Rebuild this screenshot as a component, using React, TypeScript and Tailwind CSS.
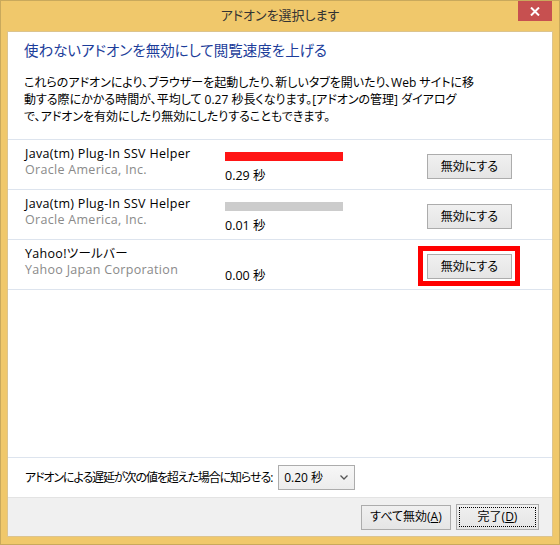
import React from "react";

const jp = "font-['Open_Sans','Noto_Sans_CJK_JP',sans-serif] [font-feature-settings:'palt']";

function Btn({ children, className = "" }: { children: React.ReactNode; className?: string }) {
  return (
    <div
      className={`flex items-center justify-center border border-[#acacac] bg-gradient-to-b from-[#f0f0f0] to-[#e5e5e5] text-[12px] text-black ${className}`}
    >
      {children}
    </div>
  );
}

const rows = [
  { name: "Java(tm) Plug-In SSV Helper", company: "Oracle America, Inc.", time: "0.29 秒", bar: "bg-[#ff1515]", hl: false },
  { name: "Java(tm) Plug-In SSV Helper", company: "Oracle America, Inc.", time: "0.01 秒", bar: "bg-[#cccccc]", hl: false },
  { name: "Yahoo!ツールバー", company: "Yahoo Japan Corporation", time: "0.00 秒", bar: "", hl: true },
];

export default function App() {
  return (
    <div className={`w-[560px] h-[545px] bg-[#f0c86b] border border-[#c9a95c] flex flex-col ${jp}`}>
      {/* title bar */}
      <div className="relative h-[30px] flex items-center justify-center">
        <span className="text-[13px] text-[#333333] pb-[1px]">アドオンを選択します</span>
        <div className="absolute right-[7px] top-0 w-[34px] h-[20px] bg-[#c75050] flex items-center justify-center">
          <svg width="10" height="9" viewBox="0 0 10 9">
            <path d="M1 0.5 L9 8.5 M9 0.5 L1 8.5" stroke="white" strokeWidth="2" />
          </svg>
        </div>
      </div>
      {/* client */}
      <div className="mx-[6px] h-[506px] bg-white border border-[#dcc48e] flex flex-col">
        <div className="pl-[16px] pt-[8px]">
          <div className="text-[14.5px] leading-[22px] text-[#1c3d9a]">使わないアドオンを無効にして閲覧速度を上げる</div>
          <div className="mt-[12px] text-[12px] leading-[17px] text-black">
            これらのアドオンにより、ブラウザーを起動したり、新しいタブを開いたり、Web サイトに移
            <br />
            動する際にかかる時間が、平均して 0.27 秒長くなります。[アドオンの管理] ダイアログ
            <br />
            で、アドオンを有効にしたり無効にしたりすることもできます。
          </div>
        </div>
        <div className="mt-[14px] border-t border-[#dde4ee]">
          {rows.map((r, i) => (
            <div key={i} className="h-[50px] border-b border-[#dde4ee] flex">
              <div className="w-[217px] pl-[17px] pt-[6px] text-[12.5px] leading-[16px] tracking-[0.3px]">
                <div className="text-black">{r.name}</div>
                <div className="text-[#8a8a8a]">{r.company}</div>
              </div>
              <div className="w-[201px] pt-[12px]">
                <div className={`w-[118px] h-[9px] ${r.bar}`} />
                <div className="mt-[7px] text-[12.5px] leading-[15px] text-black">{r.time}</div>
              </div>
              <div className="pt-[14px] pl-[1px]">
                <div className="relative">
                  {r.hl && (
                    <div className="absolute -left-[9px] -top-[8px] w-[102px] h-[40px] border-[5px] border-[#ff0000]" />
                  )}
                  <Btn className="w-[85px] h-[25px]">無効にする</Btn>
                </div>
              </div>
            </div>
          ))}
        </div>
        <div className="flex-1" />
        <div className="border-t border-[#dde4ee] h-[40px] flex items-center pl-[17px] text-[12px]">
          <span className="text-black tracking-[-1.1px]">アドオンによる遅延が次の値を超えた場合に知らせる:</span>
          <div className="ml-[6px] w-[77px] h-[25px] border border-[#acacac] bg-gradient-to-b from-[#f7f7f7] to-[#ececec] flex items-center pl-[5px] pr-[6px]">
            <span className="flex-1">0.20 秒</span>
            <svg width="8" height="5" viewBox="0 0 8 5">
              <path d="M0.5 0.5 L4 4 L7.5 0.5" stroke="#555" strokeWidth="1.3" fill="none" />
            </svg>
          </div>
        </div>
        <div className="h-[39px] bg-[#f0f0f0] border-t border-[#e3e3e3] flex items-center justify-end pr-[13px] gap-[5px]">
          <Btn className="w-[90px] h-[25px]">
            すべて無効(<span className="underline">A</span>)
          </Btn>
          <Btn className="w-[83px] h-[26px] p-[2px]">
            <div className="w-full h-full border border-dotted border-black flex items-center justify-center">
              完了(<span className="underline">D</span>)
            </div>
          </Btn>
        </div>
      </div>
    </div>
  );
}
